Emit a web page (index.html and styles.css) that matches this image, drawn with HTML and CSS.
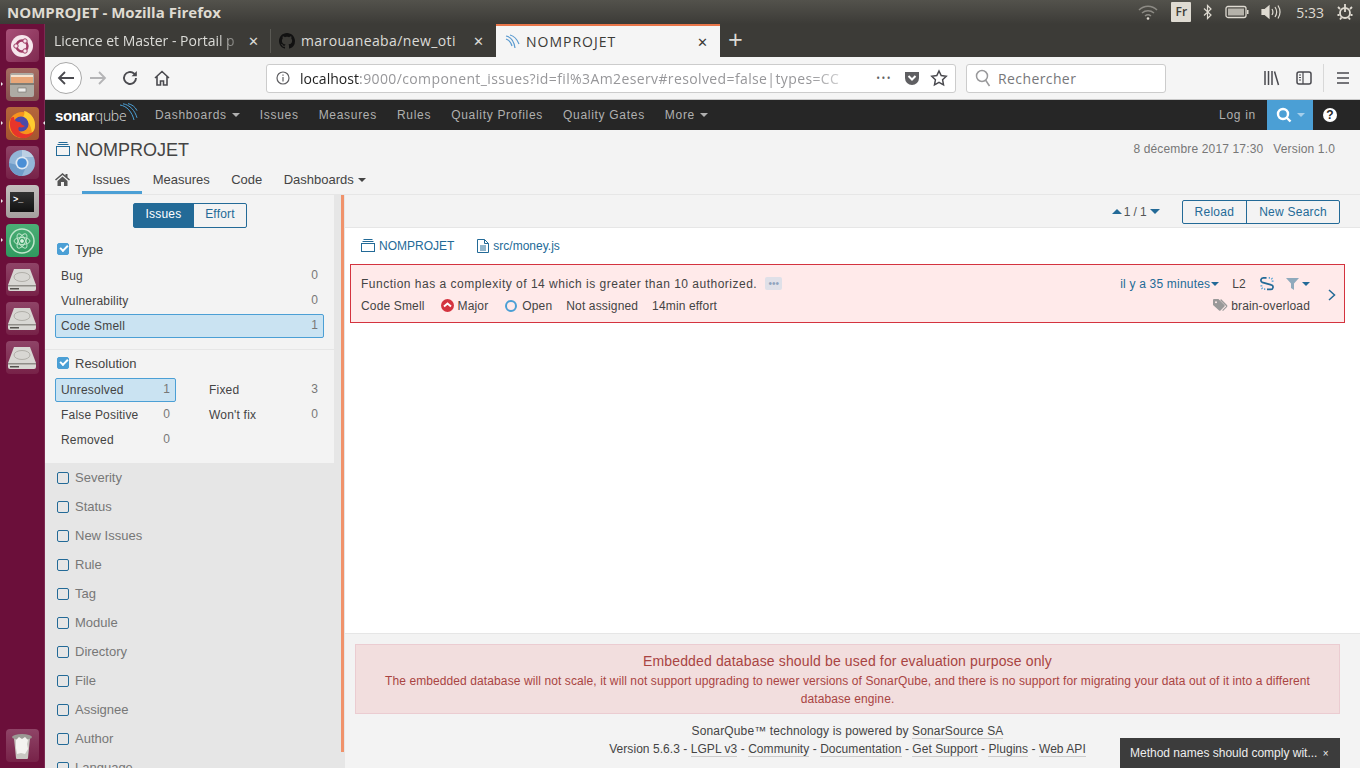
FILE: index.html
```html
<!DOCTYPE html>
<html lang="fr">
<head>
    <meta charset="UTF-8">
    <title>NOMPROJET - Mozilla Firefox</title>
    <link rel="stylesheet" href="styles.css">
</head>
<body>
    <header class="os-bar">
        <span class="os-title">NOMPROJET - Mozilla Firefox</span>
        <div class="os-tray">
            <svg class="tray-wifi" width="22" height="16" viewBox="0 0 22 16" fill="none" stroke="#8d8b85" stroke-width="1.5"><path d="M2 6c5-5 13-5 18 0M5 9c3.500-3 8.500-3 12 0M8 12c1.800-1.500 4.200-1.500 6 0"/><circle cx="11" cy="14.500" r="1.300" fill="#dfdbd2" stroke="none"/></svg>
            <span class="tray-lang">Fr</span>
            <svg width="10" height="16" viewBox="0 0 10 16" fill="none" stroke="#dfdbd2" stroke-width="1.200"><path d="M1 4.500l7 6.500-3.500 3.500v-13l3.500 3.500-7 6.500"/></svg>
            <svg width="24" height="14" viewBox="0 0 24 14"><rect x="1" y="1.500" width="20" height="11" rx="2" fill="none" stroke="#dfdbd2" stroke-width="1.300"/><rect x="3" y="3.500" width="16" height="7" fill="#b5b2aa"/><rect x="22" y="5" width="1.500" height="4" fill="#dfdbd2"/></svg>
            <svg width="20" height="16" viewBox="0 0 20 16" fill="none" stroke="#dfdbd2" stroke-width="1.200"><path d="M1 5.500h3l4-3.500v12l-4-3.500h-3z" fill="#dfdbd2"/><path d="M11 5c1.200 2 1.200 4 0 6M14 3c2 3 2 7 0 10M17 1.500c2.500 4 2.500 9 0 13"/></svg>
            <span class="tray-clock">5:33</span>
            <svg width="18" height="18" viewBox="0 0 18 18" fill="none" stroke="#dfdbd2" stroke-width="1.800"><circle cx="9" cy="10" r="5"/><path d="M9 1v8M9 1v2M2 4l2 2M16 4l-2 2M1.500 12h2M14.500 12h2M4 16.500l1.500-2M14 16.500l-1.500-2"/></svg>
        </div>
    </header>

    <div class="desktop">
        <nav class="launcher">
            <div class="tile tile-dash"><svg width="24" height="24" viewBox="0 0 24 24"><circle cx="12" cy="12" r="11" fill="#f6e6ec"/><circle cx="12" cy="12" r="5.500" fill="none" stroke="#a03a64" stroke-width="2.400"/><circle cx="6" cy="12" r="2.200" fill="#f6e6ec" stroke="#a03a64"/><circle cx="15" cy="7" r="2.200" fill="#f6e6ec" stroke="#a03a64"/><circle cx="15" cy="17" r="2.200" fill="#f6e6ec" stroke="#a03a64"/></svg></div>
            <div class="tile tile-files is-running"><svg width="26" height="26" viewBox="0 0 26 26"><rect x="1" y="1" width="24" height="24" rx="2" fill="#aeaba4"/><rect x="2" y="3" width="22" height="8" fill="#e8a678"/><rect x="2" y="3" width="22" height="2" fill="#f6e3cf"/><rect x="1" y="11" width="24" height="2" fill="#807d76"/><rect x="9" y="16" width="8" height="4" fill="#ecebe8" stroke="#6f6d68" stroke-width=".6"/></svg></div>
            <div class="tile tile-firefox is-running is-active"><svg width="30" height="30" viewBox="0 0 30 30"><circle cx="15" cy="16" r="13" fill="#f7941d"/><path d="M17 2c6 1 11 7 11 14 0 3-1 6-3 8-1-8-4-13-10-15 2-2 3-4 2-7z" fill="#ffcb2f"/><circle cx="14" cy="15" r="7.500" fill="#4c4aa8"/><path d="M4 9c-3 8 0 18 10 20 6 .8 11-2 13-7-4 4-11 4-14 1-2-2-2-4-1-5 3 1 5 0 6-1-3-1-4-2-5-4-3 0-6-1-6-5-1 0-2 0-3 1z" fill="#e8352a"/></svg></div>
            <div class="tile tile-chrome"><svg width="28" height="28" viewBox="0 0 28 28"><circle cx="14" cy="14" r="13" fill="#93b6d8"/><path d="M14 1a13 13 0 0 1 11.500 7h-11.500z" fill="#bcd0e4"/><path d="M1 14a13 13 0 0 0 13 13l4-9z" fill="#6f9cc9"/><circle cx="14" cy="14" r="6.500" fill="#dfe9f3"/><circle cx="14" cy="14" r="4.800" fill="#4a8fd6"/></svg></div>
            <div class="tile tile-term is-running"><div class="term-screen">&gt;_</div></div>
            <div class="tile tile-atom is-running"><svg width="28" height="28" viewBox="0 0 28 28" fill="none" stroke="#bfe6cb" stroke-width="1"><circle cx="14" cy="14" r="12" stroke-width="1.500"/><ellipse cx="14" cy="14" rx="8" ry="3.500"/><ellipse cx="14" cy="14" rx="8" ry="3.500" transform="rotate(60 14 14)"/><ellipse cx="14" cy="14" rx="8" ry="3.500" transform="rotate(120 14 14)"/><circle cx="14" cy="14" r="1.500" fill="#e4f5e9"/></svg></div>
            <div class="tile tile-disk"><svg width="30" height="24" viewBox="0 0 30 24"><path d="M7 1h16l6 16v4a2 2 0 0 1-2 2h-24a2 2 0 0 1-2-2v-4z" fill="#d8d7d3"/><ellipse cx="15" cy="9" rx="8" ry="4.500" fill="none" stroke="#b1afa9"/><rect x="1" y="17" width="28" height="1.500" fill="#8f8d88"/><rect x="3" y="20" width="9" height="1.500" fill="#55534f"/></svg></div>
            <div class="tile tile-disk"><svg width="30" height="24" viewBox="0 0 30 24"><path d="M7 1h16l6 16v4a2 2 0 0 1-2 2h-24a2 2 0 0 1-2-2v-4z" fill="#d8d7d3"/><ellipse cx="15" cy="9" rx="8" ry="4.500" fill="none" stroke="#b1afa9"/><rect x="1" y="17" width="28" height="1.500" fill="#8f8d88"/><rect x="3" y="20" width="9" height="1.500" fill="#55534f"/></svg></div>
            <div class="tile tile-disk"><svg width="30" height="24" viewBox="0 0 30 24"><path d="M7 1h16l6 16v4a2 2 0 0 1-2 2h-24a2 2 0 0 1-2-2v-4z" fill="#d8d7d3"/><ellipse cx="15" cy="9" rx="8" ry="4.500" fill="none" stroke="#b1afa9"/><rect x="1" y="17" width="28" height="1.500" fill="#8f8d88"/><rect x="3" y="20" width="9" height="1.500" fill="#55534f"/></svg></div>
            <div class="tile tile-trash"><svg width="22" height="28" viewBox="0 0 22 28"><path d="M3 6h16l-2 20a1 1 0 0 1-1 1h-10a1 1 0 0 1-1-1z" fill="#c9c7c2"/><ellipse cx="11" cy="5" rx="10" ry="3" fill="#9b9994"/><path d="M5 8l3-3 3 2 3-2 3 3-1 4 1 5-3 5-4-1-4 1-1-6z" fill="#f4f3f0"/></svg></div>
        </nav>

        <div class="browser">
            <div class="tabbar">
                <div class="tab">
                    <span class="tab-text tab-fade">Licence et Master - Portail p</span>
                    <span class="tab-close">✕</span>
                </div>
                <div class="tab tab-github">
                    <svg width="16" height="16" viewBox="0 0 16 16" fill="#111"><path d="M8 0C3.580 0 0 3.580 0 8c0 3.540 2.290 6.530 5.470 7.590.4.070.55-.170.55-.380 0-.190-.010-.820-.010-1.490-2.010.370-2.530-.490-2.690-.940-.090-.230-.480-.940-.820-1.130-.280-.150-.680-.520-.010-.530.630-.010 1.080.580 1.230.820.720 1.210 1.870.870 2.330.660.070-.520.280-.870.510-1.070-1.780-.200-3.640-.890-3.640-3.950 0-.870.310-1.590.820-2.150-.080-.200-.360-1.020.080-2.120 0 0 .670-.210 2.200.820.640-.180 1.320-.270 2-.270s1.360.090 2 .270c1.530-1.040 2.200-.820 2.200-.820.440 1.100.160 1.920.080 2.120.510.560.820 1.270.820 2.150 0 3.070-1.870 3.750-3.650 3.950.290.250.540.730.540 1.480 0 1.070-.010 1.930-.010 2.200 0 .210.150.460.550.380A8.010 8.010 0 0 0 16 8c0-4.420-3.580-8-8-8z"/></svg>
                    <span class="tab-text">marouaneaba/new_oti</span>
                    <span class="tab-close">✕</span>
                </div>
                <div class="tab tab-active">
                    <svg width="16" height="16" viewBox="0 0 16 16" fill="none" stroke="#5b9bd0" stroke-width="1.200"><path d="M1 2c5 1 8 5 9 12M1 5c3 1 5 3 6 7M5 1c4 1 7 4 9 9"/></svg>
                    <span class="tab-text">NOMPROJET</span>
                    <span class="tab-close">✕</span>
                </div>
                <span class="tab-new">+</span>
            </div>

            <div class="toolbar">
                <button class="nav-btn back-btn"><svg width="18" height="18" viewBox="0 0 18 18" fill="none" stroke="#4a4a4f" stroke-width="1.800"><path d="M17 9H2M8 3L2 9l6 6"/></svg></button>
                <button class="nav-btn"><svg width="18" height="18" viewBox="0 0 18 18" fill="none" stroke="#b4b4b6" stroke-width="1.800"><path d="M1 9h15M10 3l6 6-6 6"/></svg></button>
                <button class="nav-btn"><svg width="16" height="16" viewBox="0 0 16 16" fill="none" stroke="#4a4a4f" stroke-width="1.900"><path d="M14 8a6 6 0 1 1-2-4.500L14 5"/><path d="M14.800 1v5.200h-5.200z" fill="#4a4a4f" stroke="none"/></svg></button>
                <button class="nav-btn"><svg width="16" height="16" viewBox="0 0 16 16" fill="none" stroke="#4a4a4f" stroke-width="1.600"><path d="M1 8l7-6.500L15 8M3 6.500V15h3.500v-4h3v4H13V6.500"/></svg></button>
                <div class="urlbar">
                    <svg width="14" height="14" viewBox="0 0 14 14" fill="none" stroke="#5f5f62" stroke-width="1.200"><circle cx="7" cy="7" r="6"/><path d="M7 6v4.500M7 3.500v1.300"/></svg>
                    <span class="url-text"><span class="url-host">localhost</span>:9000/component_issues?id=fil%3Am2eserv#resolved=false|types=CC</span>
                    <span class="url-dots">•••</span>
                    <svg width="16" height="16" viewBox="0 0 16 16"><path d="M1 2h14v6a7 7 0 0 1-14 0z" fill="#5f5f62"/><path d="M4.500 6L8 9.500 11.500 6" fill="none" stroke="#fff" stroke-width="2"/></svg>
                    <svg width="18" height="18" viewBox="0 0 18 18" fill="none" stroke="#4a4a4f" stroke-width="1.500"><path d="M9 2l2.200 4.600 5 .7-3.600 3.500.9 5L9 13.400l-4.500 2.400.9-5L1.800 7.300l5-.7z"/></svg>
                </div>
                <div class="searchbar">
                    <svg width="16" height="18" viewBox="0 0 16 18" fill="none" stroke="#99999b" stroke-width="1.500"><circle cx="7" cy="7" r="5.500"/><path d="M10.500 11l4 6"/></svg>
                    <span>Rechercher</span>
                </div>
                <div class="toolbar-right">
                    <svg width="16" height="16" viewBox="0 0 16 16" fill="none" stroke="#4a4a4f" stroke-width="1.500"><path d="M1 1v14M4.500 1v14M8 1v14M10.500 1.500l4 13.500"/></svg>
                    <svg width="16" height="16" viewBox="0 0 16 16" fill="none" stroke="#4a4a4f" stroke-width="1.500"><rect x="1" y="2" width="14" height="12" rx="2"/><path d="M7 2v12M3 5h2M3 7.500h2M3 10h2" stroke-width="1.200"/></svg>
                    <span class="toolbar-sep"></span>
                    <svg width="14" height="14" viewBox="0 0 14 14" stroke="#4a4a4f" stroke-width="1.700"><path d="M1 2h12M1 7h12M1 12h12"/></svg>
                </div>
            </div>

            <div class="page">
                <div class="sq-nav">
                    <div class="sq-logo">
                        <span class="logo-sonar">sonar</span><span class="logo-qube">qube</span>
                        <svg class="logo-waves" width="19" height="18" viewBox="0 0 19 18" fill="none" stroke="#4b9fd5" stroke-width="1"><path d="M1 2c7 1 12 7 14 15M4 .8c7 1 12 7 14 14M9 .6c4 1 7 3 9 7"/></svg>
                    </div>
                    <a>Dashboards <i class="caret"></i></a>
                    <a>Issues</a>
                    <a>Measures</a>
                    <a>Rules</a>
                    <a>Quality Profiles</a>
                    <a>Quality Gates</a>
                    <a>More <i class="caret"></i></a>
                    <a class="sq-login">Log in</a>
                    <div class="sq-search"><svg width="16" height="16" viewBox="0 0 16 16" fill="none" stroke="#fff" stroke-width="2.400"><circle cx="7" cy="7" r="5"/><path d="M10.500 10.500l4 4"/></svg><i class="caret caret-dim"></i></div>
                    <div class="sq-help">?</div>
                </div>

                <div class="context">
                    <div class="context-top">
                        <svg width="14" height="14" viewBox="0 0 14 14" fill="none" stroke="#236a97"><rect x=".5" y="4.500" width="13" height="9"/><path d="M1.500 2.500h11M2.500 .5h9"/></svg>
                        <h1>NOMPROJET</h1>
                        <span class="context-date">8 décembre 2017 17:30</span>
                        <span class="context-version">Version 1.0</span>
                    </div>
                    <div class="context-tabs">
                        <svg class="home-icon" width="15" height="13" viewBox="0 0 15 13" fill="#555"><path d="M7.500 0L0 6.500l1 1 6.500-5.500L14 7.500l1-1-2.500-2.200V1h-2v1.600zM2.500 8v5h3.500V9h3v4h3.500V8L7.500 3.500z"/></svg>
                        <a class="ctx-active">Issues</a>
                        <a>Measures</a>
                        <a>Code</a>
                        <a>Dashboards <i class="caret caret-dark"></i></a>
                    </div>
                </div>

                <div class="workspace">
                    <aside class="sidebar">
                        <div class="facets-open">
                            <div class="mode-toggle">
                                <span class="mode-on">Issues</span>
                                <span class="mode-off">Effort</span>
                            </div>
                            <section class="facet facet-first">
                                <div class="facet-head"><i class="check check-on"></i>Type</div>
                                <div class="facet-list">
                                    <div class="facet-row"><span>Bug</span><b>0</b></div>
                                    <div class="facet-row"><span>Vulnerability</span><b>0</b></div>
                                    <div class="facet-row row-on"><span>Code Smell</span><b>1</b></div>
                                </div>
                            </section>
                            <section class="facet">
                                <div class="facet-head"><i class="check check-on"></i>Resolution</div>
                                <div class="facet-list facet-cols">
                                    <div class="facet-row row-on"><span>Unresolved</span><b>1</b></div>
                                    <div class="facet-row row-fixed"><span>Fixed</span><b>3</b></div>
                                    <div class="facet-row"><span>False Positive</span><b>0</b></div>
                                    <div class="facet-row row-fixed"><span>Won't fix</span><b>0</b></div>
                                    <div class="facet-row"><span>Removed</span><b>0</b></div>
                                </div>
                            </section>
                        </div>
                        <div class="facets-closed">
                            <div class="facet-closed"><i class="check"></i>Severity</div>
                            <div class="facet-closed"><i class="check"></i>Status</div>
                            <div class="facet-closed"><i class="check"></i>New Issues</div>
                            <div class="facet-closed"><i class="check"></i>Rule</div>
                            <div class="facet-closed"><i class="check"></i>Tag</div>
                            <div class="facet-closed"><i class="check"></i>Module</div>
                            <div class="facet-closed"><i class="check"></i>Directory</div>
                            <div class="facet-closed"><i class="check"></i>File</div>
                            <div class="facet-closed"><i class="check"></i>Assignee</div>
                            <div class="facet-closed"><i class="check"></i>Author</div>
                            <div class="facet-closed"><i class="check"></i>Language</div>
                        </div>
                        <div class="resizer"></div>
                    </aside>

                    <main class="content">
                        <div class="content-bar">
                            <span class="paging"><i class="tri-up"></i>1 / 1<i class="tri-down"></i></span>
                            <div class="btn-group">
                                <span>Reload</span>
                                <span>New Search</span>
                            </div>
                        </div>
                        <div class="issues">
                            <div class="crumbs">
                                <a><svg width="14" height="13" viewBox="0 0 14 13" fill="none" stroke="#236a97"><rect x=".5" y="4.500" width="13" height="8"/><path d="M1.500 2.500h11M2.500 .5h9"/></svg>NOMPROJET</a>
                                <a><svg width="12" height="14" viewBox="0 0 12 14" fill="none" stroke="#236a97"><path d="M.5 .5h7l4 4v9h-11zM7.500 .5v4h4M3 7h6M3 9h6M3 11h6"/></svg>src/money.js</a>
                            </div>
                            <article class="issue">
                                <div class="issue-body">
                                    <div class="issue-line">
                                        <span class="issue-msg">Function has a complexity of 14 which is greater than 10 authorized.</span>
                                        <span class="issue-more">•••</span>
                                        <a class="issue-age">il y a 35 minutes<i class="caret caret-blue"></i></a>
                                        <span class="issue-line-no">L2</span>
                                        <svg width="14" height="15" viewBox="0 0 15 15" fill="none"><path d="M7 1.500H3.500a2.500 2.500 0 0 0-1 4.800L12 9a2.400 2.400 0 0 1-1 4.800H7.500" stroke="#236a97" stroke-width="1.800"/><path d="M10 .5v2M13.500 1.500L12 3M14.500 5h-2M.5 10h2M1.500 13.500L3 12M5 14.500v-2" stroke="#4b9fd5" stroke-width="1.200"/></svg>
                                        <span class="issue-filter"><svg width="13" height="13" viewBox="0 0 13 13" fill="#8fa9bc"><path d="M0 1h13L8 6.500V13L5 11V6.500z"/></svg><i class="caret caret-blue"></i></span>
                                    </div>
                                    <div class="issue-line issue-meta">
                                        <span class="meta-type">Code Smell</span>
                                        <span class="sev sev-major"><svg width="13" height="13" viewBox="0 0 13 13"><circle cx="6.500" cy="6.500" r="6.500" fill="#d4333f"/><path d="M3 7.500l3.500-3 3.500 3" fill="none" stroke="#fff" stroke-width="2"/></svg>Major</span>
                                        <span class="sev sev-open"><i class="open-dot"></i>Open</span>
                                        <span>Not assigned</span>
                                        <span>14min effort</span>
                                        <span class="issue-tags"><svg width="15" height="13" viewBox="0 0 15 13" fill="#999"><path d="M0 1a1 1 0 0 1 1-1h4.500l6 6a1 1 0 0 1 0 1.400l-4 4.100a1 1 0 0 1-1.400 0L0 6zM3 2.200a1 1 0 1 0 0 2 1 1 0 0 0 0-2zM8 0l6 6a1.500 1.500 0 0 1 0 2l-4 4-.8-.800 4-4-6-6z"/></svg>brain-overload</span>
                                    </div>
                                </div>
                                <svg class="issue-chevron" width="8" height="12" viewBox="0 0 8 12" fill="none" stroke="#236a97" stroke-width="1.500"><path d="M1 1l5.500 5L1 11"/></svg>
                            </article>
                        </div>
                        <footer class="foot">
                            <div class="db-warning">
                                <h3>Embedded database should be used for evaluation purpose only</h3>
                                <p>The embedded database will not scale, it will not support upgrading to newer versions of SonarQube, and there is no support for migrating your data out of it into a different database engine.</p>
                            </div>
                            <div class="foot-text">
                                <div class="foot-powered">SonarQube™ technology is powered by <a>SonarSource SA</a></div>
                                <div class="foot-links">Version 5.6.3 - <a>LGPL v3</a> - <a>Community</a> - <a>Documentation</a> - <a>Get Support</a> - <a>Plugins</a> - <a>Web API</a></div>
                            </div>
                        </footer>
                    </main>
                </div>
                <div class="toast">Method names should comply wit... <span class="toast-x">×</span></div>
            </div>
        </div>
    </div>
</body>
</html>
```

FILE: styles.css
```css
* {
    box-sizing: border-box;
}
html, body {
    margin: 0;
    height: 768px;
    overflow: hidden;
}
body {
    font-family: "Liberation Sans", Arial, sans-serif;
    font-size: 12px;
    color: #444;
    display: flex;
    flex-direction: column;
}
a {
    color: inherit;
}

/* ubuntu top bar */
.os-bar {
    height: 24px;
    flex: none;
    display: flex;
    align-items: center;
    justify-content: space-between;
    padding: 0 6px 0 7px;
    background: linear-gradient(#53524c, #3c3b37);
    color: #dfdbd2;
    font-family: "Open Sans", sans-serif;
}
.os-title {
    font-size: 15px;
    font-weight: 700;
}
.os-tray {
    display: flex;
    align-items: center;
    gap: 12px;
}
.tray-lang {
    width: 20px;
    height: 20px;
    line-height: 20px;
    text-align: center;
    background: #dfdbd2;
    color: #3c3b37;
    font-size: 12px;
    font-weight: 600;
    border-radius: 1px;
}
.tray-clock {
    font-size: 14px;
    margin-left: 3px;
}

/* launcher */
.desktop {
    flex: 1;
    display: flex;
    min-height: 0;
}
.launcher {
    width: 45px;
    flex: none;
    display: flex;
    flex-direction: column;
    align-items: center;
    gap: 6px;
    padding: 5px 0 6px;
    background: #6b0f3a;
    border-right: 1px solid #7d2a52;
}
.tile {
    width: 33px;
    height: 33px;
    flex: none;
    position: relative;
    display: flex;
    align-items: center;
    justify-content: center;
    border-radius: 4px;
    background: linear-gradient(#8f4467, #772248);
}
.is-running::before, .is-active::after {
    content: "";
    position: absolute;
    top: 14px;
    border: 2.500px solid transparent;
}
.is-running::before {
    left: -5px;
    border-left-color: #eee;
    border-right: 0;
}
.is-active::after {
    right: -6px;
    border-right-color: #eee;
    border-left: 0;
}
.tile-dash {
    background: linear-gradient(135deg, #a85078, #7f2a50);
}
.tile-files {
    background: linear-gradient(#a66d62, #85504f);
}
.tile-firefox {
    background: linear-gradient(#b4663c, #a5552f);
}
.tile-term {
    background: linear-gradient(#c4bfbe, #a59f9e);
}
.term-screen {
    width: 24px;
    height: 20px;
    padding-left: 3px;
    line-height: 14px;
    background: linear-gradient(#333, #111);
    color: #fff;
    font-size: 9px;
    font-weight: 700;
}
.tile-atom {
    background: linear-gradient(#4cae76, #2f9a5f);
}
.tile-trash {
    margin-top: auto;
}

/* firefox */
.browser {
    flex: 1;
    min-width: 0;
    display: flex;
    flex-direction: column;
}
.tabbar {
    height: 33px;
    flex: none;
    display: flex;
    align-items: center;
    background: #3c3b37;
    color: #dcdcd8;
    font-family: "Open Sans", sans-serif;
    font-size: 14px;
}
.tab {
    width: 225px;
    height: 33px;
    display: flex;
    align-items: center;
    padding: 0 10px 0 9px;
    position: relative;
}
.tab-github {
    gap: 6px;
    padding-left: 9px;
    width: 226px;
    letter-spacing: .4px;
}
.tab-github::before {
    content: "";
    position: absolute;
    left: 0;
    top: 5px;
    bottom: 4px;
    width: 1px;
    background: #5a5954;
}
.tab-text {
    flex: 1;
    overflow: hidden;
    white-space: nowrap;
}
.tab-fade {
    -webkit-mask-image: linear-gradient(90deg, #000 85%, transparent);
    mask-image: linear-gradient(90deg, #000 85%, transparent);
}
.tab-close {
    font-size: 13px;
    width: 14px;
    text-align: center;
}
.tab-active {
    background: #f5f5f5;
    color: #3c3b37;
    border-top: 2px solid #e9764a;
    gap: 5px;
    width: 224px;
    padding-right: 10px;
    letter-spacing: 1px;
}
.tab-new {
    font-size: 26px;
    line-height: 1;
    margin-left: 8px;
    margin-bottom: 3px;
}
.toolbar {
    height: 43px;
    flex: none;
    display: flex;
    align-items: center;
    padding: 0 10px 0 5px;
    background: #f5f5f5;
    border-bottom: 1px solid #c8c8c8;
    font-family: "Open Sans", sans-serif;
}
.nav-btn {
    width: 32px;
    height: 32px;
    padding: 0;
    display: flex;
    align-items: center;
    justify-content: center;
    background: none;
    border: 0;
}
.back-btn {
    background: #fff;
    border: 1px solid #a9a9a9;
    border-radius: 50%;
}
.urlbar {
    width: 690px;
    height: 29px;
    margin-left: 88px;
    display: flex;
    align-items: center;
    gap: 10px;
    padding: 0 7px 0 9px;
    background: #fff;
    border: 1px solid #ccc;
    border-radius: 3px;
    font-size: 14px;
    color: #97979a;
    letter-spacing: .38px;
}
.url-text {
    flex: 1;
    overflow: hidden;
    white-space: nowrap;
    -webkit-mask-image: linear-gradient(90deg, #000 90%, transparent);
    mask-image: linear-gradient(90deg, #000 90%, transparent);
}
.url-host {
    color: #222;
    letter-spacing: .05px;
}
.url-dots {
    font-size: 10px;
    letter-spacing: 1.500px;
    color: #5f5f62;
    margin-right: 2px;
}
.searchbar {
    width: 200px;
    height: 29px;
    margin-left: 10px;
    display: flex;
    align-items: center;
    gap: 7px;
    padding-left: 8px;
    background: #fff;
    border: 1px solid #ccc;
    border-radius: 3px;
    font-size: 14px;
    color: #77777a;
    letter-spacing: .4px;
}
.toolbar-right {
    margin-left: auto;
    display: flex;
    align-items: center;
    gap: 16px;
}
.toolbar-sep {
    width: 1px;
    height: 28px;
    background: #d8d8d8;
    margin: 0 -4px 0 -5px;
}

/* sonarqube page */
.page {
    flex: 1;
    min-height: 0;
    display: flex;
    flex-direction: column;
    position: relative;
    overflow: hidden;
    background: #f3f3f3;
}
.sq-nav {
    height: 30px;
    flex: none;
    display: flex;
    align-items: center;
    gap: 20px;
    background: #262626;
    color: #b0b0b0;
    letter-spacing: .7px;
}
.sq-nav a {
    white-space: nowrap;
}
.sq-logo {
    position: relative;
    width: 100px;
    padding-left: 10px;
    margin-right: -10px;
    font-size: 15px;
    letter-spacing: 0;
    line-height: 1;
    white-space: nowrap;
}
.logo-sonar {
    color: #fff;
    font-weight: 700;
    letter-spacing: -.4px;
}
.logo-qube {
    color: #ddd;
    font-family: "Open Sans", sans-serif;
    font-weight: 300;
    font-size: 14px;
    letter-spacing: -.3px;
    margin-left: 1px;
}
.logo-waves {
    position: absolute;
    left: 74px;
    top: -5px;
}
.caret {
    display: inline-block;
    border: 4px solid transparent;
    border-top-color: currentColor;
    border-bottom: 0;
    vertical-align: 2px;
    margin-left: 1px;
}
.caret-dark {
    color: #444;
}
.caret-blue {
    color: #236a97;
}
.caret-dim {
    color: #a5cfeb;
    margin-left: 5px;
}
.sq-login {
    margin-left: auto;
}
.sq-search {
    width: 46px;
    height: 30px;
    margin-left: -9px;
    display: flex;
    align-items: center;
    justify-content: center;
    background: #4b9fd5;
}
.sq-help {
    width: 14px;
    height: 14px;
    line-height: 14px;
    margin: 0 23px 0 -10px;
    text-align: center;
    background: #fff;
    color: #262626;
    border-radius: 50%;
    font-weight: 700;
    letter-spacing: 0;
}
.context {
    height: 65px;
    flex: none;
    padding: 0 25px 0 10px;
    border-bottom: 1px solid #e6e6e6;
}
.context-top {
    height: 38px;
    display: flex;
    align-items: center;
    gap: 6px;
    padding-left: 1px;
}
.context-top h1 {
    flex: 1;
    margin: 0;
    padding-top: 2px;
    font-size: 18px;
    font-weight: 400;
    color: #444;
}
.context-date, .context-version {
    color: #777;
    letter-spacing: .15px;
}
.context-version {
    margin-left: 4px;
}
.context-tabs {
    height: 26px;
    display: flex;
    align-items: center;
    color: #444;
    font-size: 13px;
}
.context-tabs a {
    height: 26px;
    padding: 3px 10.700px 0;
    line-height: 18px;
}
.home-icon {
    margin: 0 12px 3px 0;
}
.context-tabs .ctx-active {
    padding: 3px 12px 0 10.500px;
    border-bottom: 3px solid #4b9fd5;
}

/* left facets */
.workspace {
    flex: 1;
    min-height: 0;
    display: flex;
    letter-spacing: .2px;
}
.sidebar {
    width: 300px;
    flex: none;
    position: relative;
    background: #e6e6e6;
}
.facets-open {
    width: 289px;
    height: 268px;
    background: #f3f3f3;
    padding-top: 8px;
}
.mode-toggle {
    width: 114px;
    height: 25px;
    margin: 0 auto;
    display: flex;
    border: 1px solid #236a97;
    border-radius: 2px;
    color: #236a97;
    line-height: 21px;
    text-align: center;
}
.mode-toggle span {
    flex: 1;
}
.mode-toggle .mode-on {
    flex: 0 0 60px;
    background: #236a97;
    color: #fff;
}
.mode-toggle .mode-off {
    padding-left: 1px;
}
.facet {
    padding: 0 10px;
}
.facet-first {
    height: 114px;
    margin-top: 8px;
    border-bottom: 1px solid #e6e6e6;
}
.facet-head {
    height: 24px;
    padding: 2px 2px 0;
    display: flex;
    align-items: center;
    font-size: 13px;
    letter-spacing: 0;
    color: #444;
}
.facet-list {
    display: grid;
    grid-auto-rows: 25px;
    margin-top: 4px;
}
.facet-cols {
    grid-template-columns: 121px 125px;
    column-gap: 23px;
}
.facet-row {
    display: flex;
    justify-content: space-between;
    align-items: center;
    height: 24px;
    padding: 0 5px;
    border: 1px solid transparent;
    border-radius: 2px;
    color: #444;
}
.facet-row b {
    font-weight: 400;
    color: #777;
    margin-bottom: 2px;
}
.check {
    width: 12px;
    height: 12px;
    flex: none;
    margin-right: 6px;
    border: 1px solid #236a97;
    border-radius: 2px;
}
.check-on {
    position: relative;
    background: #4b9fd5;
    border-color: #4b9fd5;
}
.check-on::after {
    content: "";
    position: absolute;
    left: 2px;
    top: 1px;
    width: 6px;
    height: 3px;
    border-left: 2px solid #fff;
    border-bottom: 2px solid #fff;
    transform: rotate(-45deg);
}
.row-fixed {
    padding-left: 9px;
}
.row-on {
    background: #cae3f2;
    border-color: #4b9fd5;
}
.facets-closed {
    padding: 0 0 0 12px;
}
.facet-closed {
    height: 29px;
    display: flex;
    align-items: center;
    color: #777;
    font-size: 13px;
    letter-spacing: 0;
}
.resizer {
    position: absolute;
    right: 1px;
    top: 0;
    bottom: 16px;
    width: 3px;
    background: #f0926b;
}

/* issues */
.content {
    flex: 1;
    min-width: 0;
    display: flex;
    flex-direction: column;
    background: #fff;
}
.content-bar {
    height: 33px;
    flex: none;
    display: flex;
    align-items: center;
    justify-content: flex-end;
    gap: 22px;
    padding: 1px 20px 0 0;
    background: #f3f3f3;
    border-bottom: 1px solid #e6e6e6;
}
.paging {
    display: flex;
    align-items: center;
    gap: 1px;
    color: #555;
    letter-spacing: -.1px;
}
.tri-up, .tri-down {
    border: 5px solid transparent;
    border-top: 0;
    border-bottom-color: #236a97;
    margin-right: 1px;
}
.tri-down {
    border-bottom: 0;
    border-top: 5px solid #236a97;
    margin: 0 0 0 2px;
}
.btn-group {
    height: 24px;
    display: flex;
    border: 1px solid #236a97;
    border-radius: 2px;
    color: #236a97;
    line-height: 22px;
    letter-spacing: .25px;
}
.btn-group span {
    padding: 0 12px;
}
.btn-group span + span {
    border-left: 1px solid #236a97;
}
.issues {
    flex: 1;
    padding: 0 15px 0 5px;
}
.crumbs {
    height: 36px;
    display: flex;
    align-items: center;
    gap: 23px;
    padding: 0 0 1px 11px;
    color: #236a97;
    letter-spacing: 0;
}
.crumbs a {
    display: flex;
    align-items: center;
    gap: 4px;
}
.issue {
    height: 59px;
    position: relative;
    padding: 7px 34px 0 10px;
    background: #ffeaea;
    border: 1px solid #d4333f;
}
.issue-line {
    height: 23px;
    display: flex;
    align-items: center;
}
.issue-msg {
    letter-spacing: .5px;
}
.issue-more {
    width: 17px;
    height: 13px;
    margin-left: 8px;
    line-height: 13px;
    text-align: center;
    background: #dfe0e8;
    border-radius: 2px;
    color: #8fa3bd;
    font-size: 10px;
    letter-spacing: 0;
}
.issue-age {
    margin-left: auto;
    color: #236a97;
}
.issue-line-no {
    margin: 0 14px 0 13px;
}
.issue-filter {
    display: flex;
    align-items: center;
    gap: 2px;
    margin-left: 12px;
}
.issue-meta {
    gap: 14px;
    margin-top: -1px;
    letter-spacing: .15px;
}
.meta-type {
    margin-right: 2px;
}
.sev {
    display: flex;
    align-items: center;
    gap: 4px;
}
.sev-major {
    margin-right: 3px;
}
.sev-open {
    gap: 5px;
}
.open-dot {
    width: 12px;
    height: 12px;
    border: 2px solid #4b9fd5;
    border-radius: 50%;
}
.issue-tags {
    margin-left: auto;
    display: flex;
    align-items: center;
    gap: 3px;
}
.issue-chevron {
    position: absolute;
    right: 8px;
    top: 24px;
}
.foot {
    height: 135px;
    flex: none;
    padding: 10px 20px 0 10px;
    background: #f3f3f3;
    border-top: 1px solid #e6e6e6;
}
.db-warning {
    height: 70px;
    padding: 7px 15px;
    text-align: center;
    background: #f2dede;
    border: 1px solid #ebccd1;
    color: #a94442;
    letter-spacing: .1px;
}
.db-warning h3 {
    margin: 0;
    font-size: 14px;
    font-weight: 400;
    line-height: 18px;
    letter-spacing: .15px;
}
.db-warning p {
    margin: 2px 0 0;
    line-height: 18px;
}
.foot-text {
    margin-top: 8px;
    text-align: center;
    line-height: 18px;
    color: #444;
}
.foot-powered {
    letter-spacing: .14px;
}
.foot-links {
    letter-spacing: .05px;
}
.foot-text a {
    border-bottom: 1px solid #ccc;
}
.toast {
    position: absolute;
    right: 20px;
    bottom: 0;
    width: 220px;
    height: 30px;
    padding: 0 10px;
    line-height: 30px;
    background: #3c3c3c;
    color: #eee;
    white-space: nowrap;
}
.toast-x {
    font-size: 10px;
    margin-left: 2px;
}
```
